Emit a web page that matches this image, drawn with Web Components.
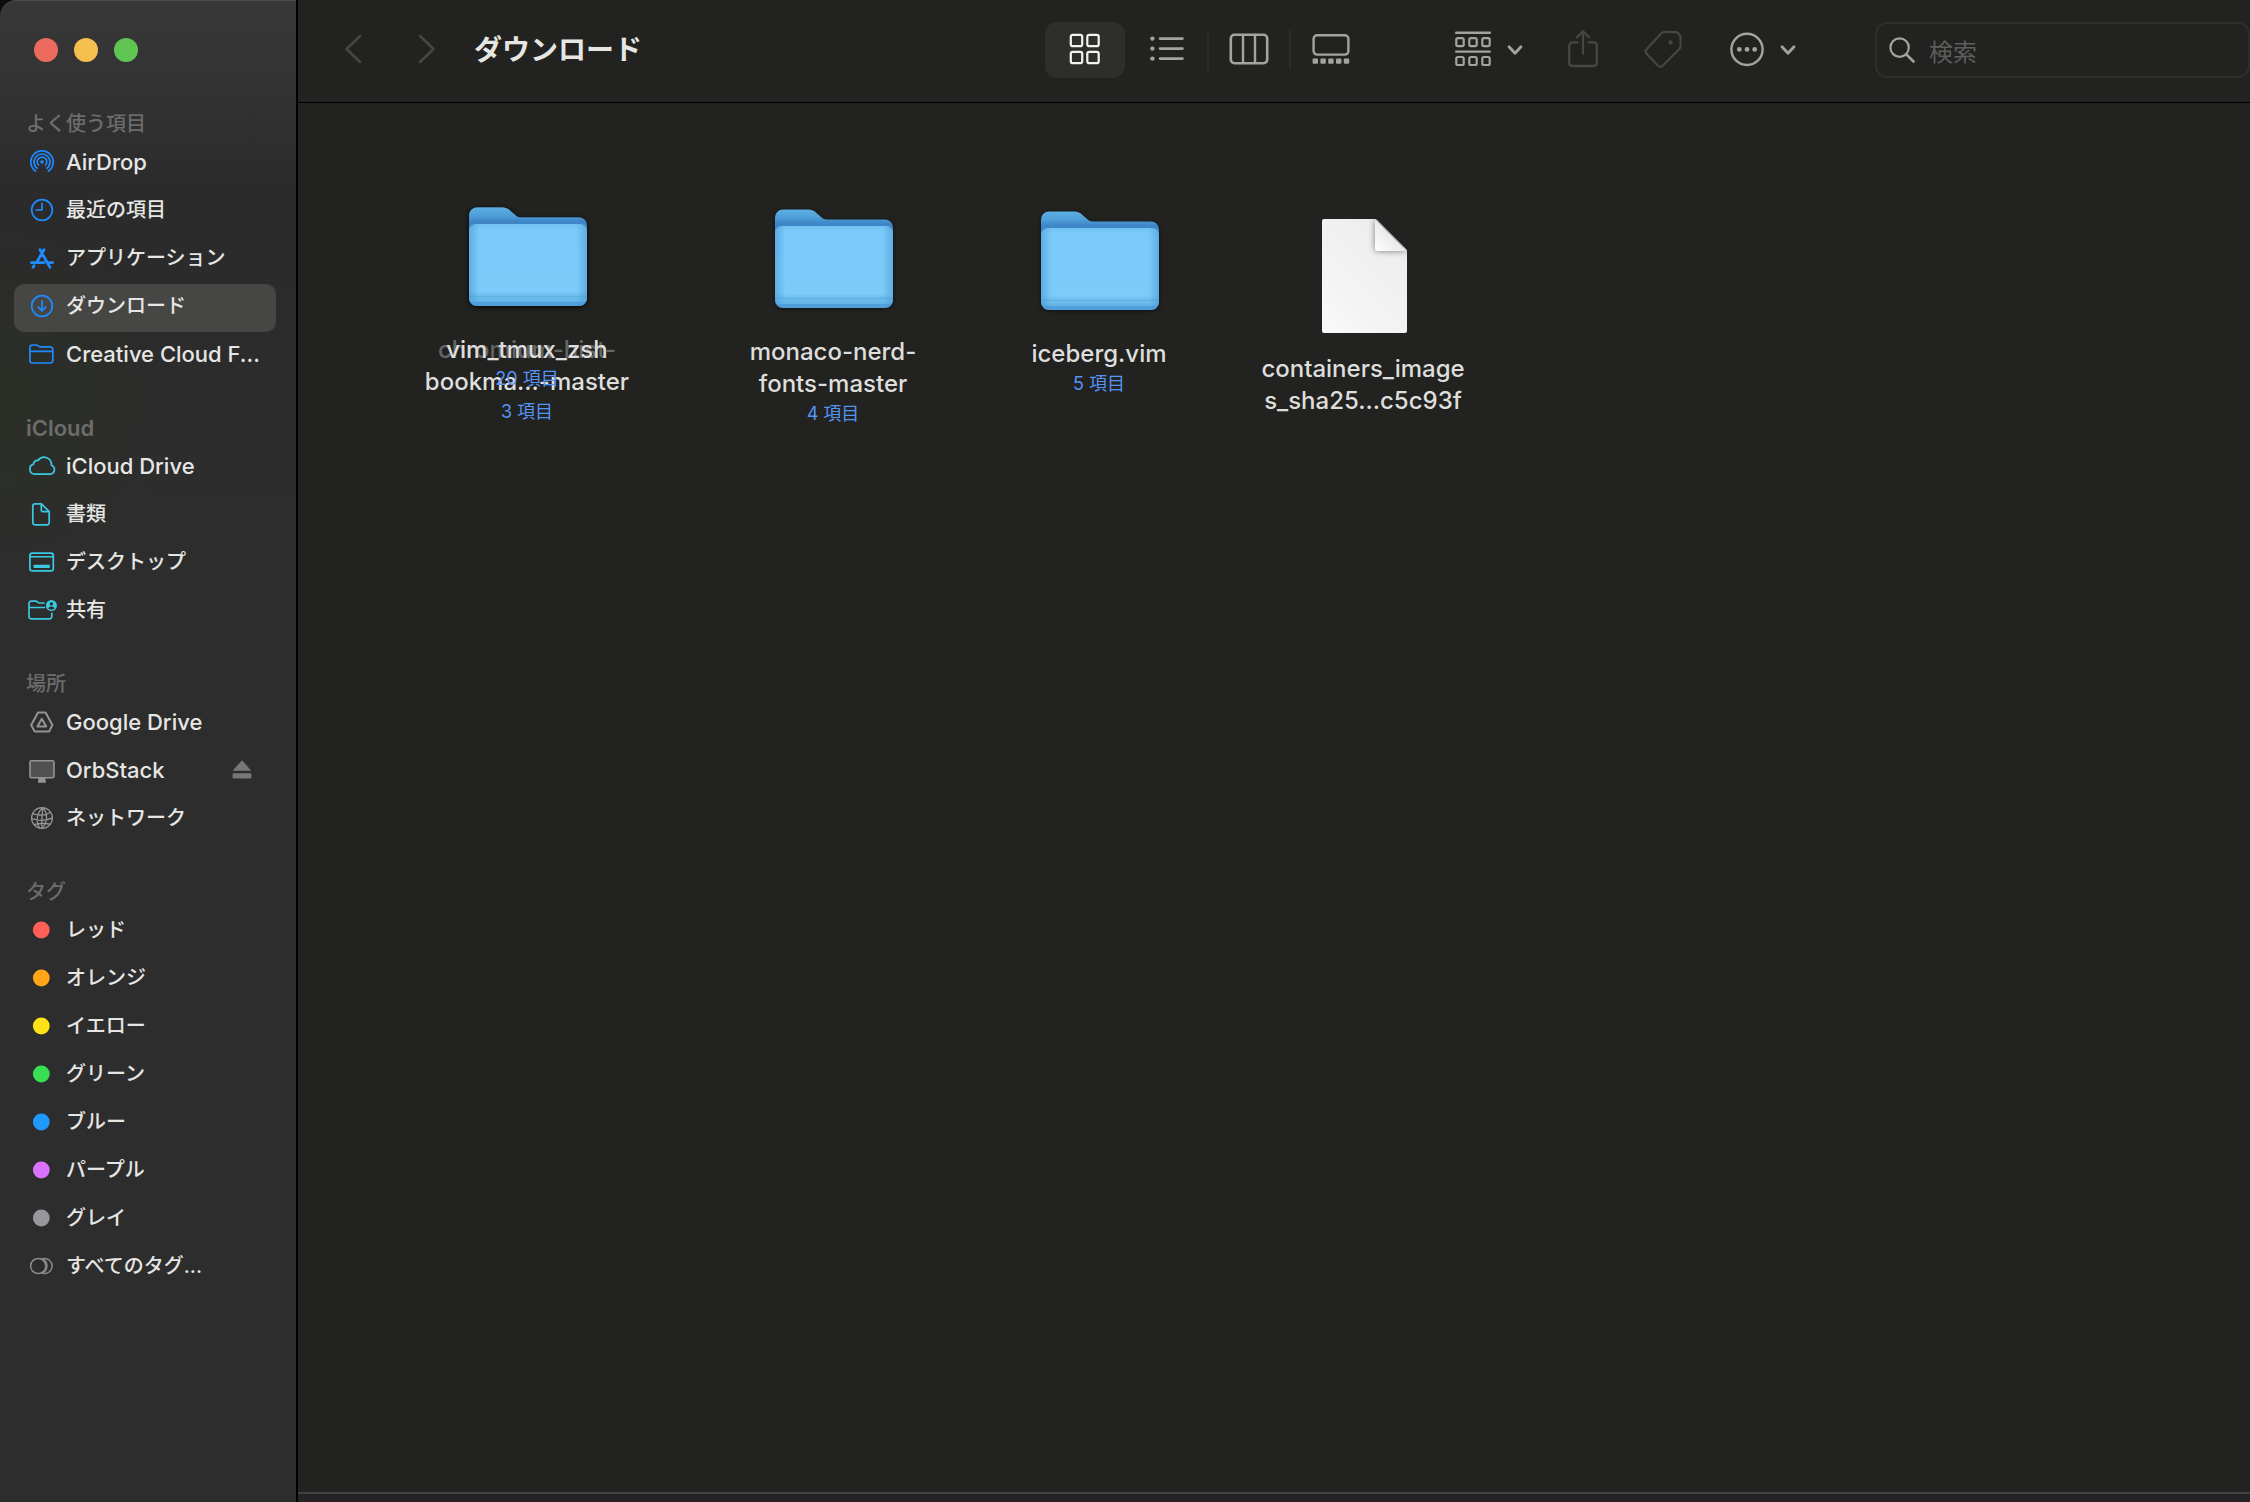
<!DOCTYPE html>
<html lang="ja">
<head>
<meta charset="utf-8">
<meta name="viewport" content="width=device-width, initial-scale=1">
<title>ダウンロード</title>
<style>
  html, body { height: 100%; }
  body {
    margin: 0;
    background: #0c0c0c;
    color: #e6e6e4;
    font: 500 20px/24px Inter, "Noto Sans CJK JP", sans-serif;
    overflow: hidden;
  }
</style>
</head>
<body>
<finder-window>
  <finder-sidebar slot="sidebar">
    <sidebar-section label="よく使う項目">
      <sidebar-item icon="airdrop" lang="en">AirDrop</sidebar-item>
      <sidebar-item icon="clock">最近の項目</sidebar-item>
      <sidebar-item icon="apps">アプリケーション</sidebar-item>
      <sidebar-item icon="download" selected>ダウンロード</sidebar-item>
      <sidebar-item icon="folder" lang="en">Creative Cloud F...</sidebar-item>
    </sidebar-section>
    <sidebar-section label="iCloud" latin style="--tint:#3bc9e2">
      <sidebar-item icon="cloud" lang="en">iCloud Drive</sidebar-item>
      <sidebar-item icon="doc">書類</sidebar-item>
      <sidebar-item icon="desktop">デスクトップ</sidebar-item>
      <sidebar-item icon="shared">共有</sidebar-item>
    </sidebar-section>
    <sidebar-section label="場所" style="--tint:#949494">
      <sidebar-item icon="gdrive" lang="en">Google Drive</sidebar-item>
      <sidebar-item icon="display" lang="en" ejectable>OrbStack</sidebar-item>
      <sidebar-item icon="globe">ネットワーク</sidebar-item>
    </sidebar-section>
    <sidebar-section label="タグ">
      <sidebar-item icon="dot" style="--tint:#ff5f57">レッド</sidebar-item>
      <sidebar-item icon="dot" style="--tint:#ffa518">オレンジ</sidebar-item>
      <sidebar-item icon="dot" style="--tint:#ffe316">イエロー</sidebar-item>
      <sidebar-item icon="dot" style="--tint:#38df54">グリーン</sidebar-item>
      <sidebar-item icon="dot" style="--tint:#1f98ff">ブルー</sidebar-item>
      <sidebar-item icon="dot" style="--tint:#d972ff">パープル</sidebar-item>
      <sidebar-item icon="dot" style="--tint:#98989c">グレイ</sidebar-item>
      <sidebar-item icon="alltags" style="--tint:#8a8a8a">すべてのタグ...</sidebar-item>
    </sidebar-section>
  </finder-sidebar>
  <finder-toolbar slot="toolbar">ダウンロード</finder-toolbar>
  <icon-canvas slot="content">
    <file-item kind="bigfolder" count="20 項目" ghost style="left:119px;top:90px">chromium-hist-</file-item>
    <file-item kind="bigfolder" count="3 項目" style="left:119px;top:90px">vim_tmux_zsh<br>bookma...-master</file-item>
    <file-item kind="bigfolder" count="4 項目" style="left:425px;top:92px">monaco-nerd-<br>fonts-master</file-item>
    <file-item kind="bigfolder" count="5 項目" style="left:691px;top:94px">iceberg.vim</file-item>
    <file-item kind="bigdoc" style="left:955px;top:109px">containers_image<br>s_sha25...c5c93f</file-item>
  </icon-canvas>
</finder-window>

<script>
const S = (w, h, body, extra = '') =>
  `<svg width="${w}" height="${h}" viewBox="0 0 ${w} ${h}" fill="none" stroke="currentColor" stroke-width="2" stroke-linecap="round" stroke-linejoin="round" aria-hidden="true" ${extra}>${body}</svg>`;

const ICONS = {
  airdrop: S(28, 28, `<g stroke-width="1.7" stroke-linecap="butt"><path d="M8.1 23.5a11.2 11.2 0 1 1 11.8 0"/><path d="M9.6 20.7a8 8 0 1 1 8.8 0"/><path d="M11 17.7a4.8 4.8 0 1 1 6 0"/></g><circle cx="14" cy="14" r="1.8" fill="currentColor" stroke="none"/>`),
  clock: S(28, 28, `<circle cx="14" cy="14" r="10.3" stroke-width="1.7"/><path d="M14 7.3V14H8" stroke-width="1.7"/>`),
  apps: S(28, 28, `<path d="M3.4 18.6H16M21.6 18.6h3M12 5.8l10 17.6M16 5.8L8.6 18.4M6 21.7l-1 1.7" stroke-width="2.8"/>`),
  download: S(28, 28, `<circle cx="14" cy="14" r="10.3" stroke-width="1.7"/><path d="M14 8.8v9.8M10.2 15l3.8 3.8 3.8-3.8" stroke-width="1.7"/>`),
  folder: S(28, 28, `<path d="M1.9 20.6V7.4a2.4 2.4 0 0 1 2.4-2.4h3.8c1.8 0 2.2 1.9 4 1.9h10.3a2.4 2.4 0 0 1 2.4 2.4v11.3a2.4 2.4 0 0 1-2.4 2.4H4.3a2.4 2.4 0 0 1-2.4-2.4zM2 11.3h22.6" stroke-width="1.7"/>`),
  cloud: S(28, 28, `<path d="M6.4 22.2a5.2 5.2 0 0 1-.9-10.1 3.9 3.9 0 0 1 4.6-3.6 7.3 7.3 0 0 1 13.3 4.8 4.6 4.6 0 0 1-1.2 8.9z" stroke-width="1.7"/>`),
  doc: S(28, 28, `<path d="M7 3.8h6.4L21.2 11.6v11a2.2 2.2 0 0 1-2.2 2.2H7a2.2 2.2 0 0 1-2.2-2.2V6A2.2 2.2 0 0 1 7 3.8zM13.3 4v6.2a1.5 1.5 0 0 0 1.5 1.5h6.2" stroke-width="1.7"/>`),
  desktop: S(28, 28, `<rect x="1.9" y="5.2" width="23.4" height="17.6" rx="2.4" stroke-width="1.7"/><path d="M2 8.8h23" stroke-width="1.4"/><rect x="5.6" y="16.7" width="16.2" height="3.4" rx=".6" fill="currentColor" stroke="none"/>`),
  shared: S(30, 28, `<path d="M16 7H11.5C9.8 7 9.4 5.2 7.7 5.2H3.2A2.2 2.2 0 0 0 1 7.4v13.2a2.2 2.2 0 0 0 2.2 2.2h18.4a2.2 2.2 0 0 0 2.2-2.2v-3.2M1 11.5h15.500" stroke-width="1.7"/><circle cx="23.4" cy="9.5" r="5.5" fill="currentColor" stroke="none"/><circle cx="23.4" cy="7.9" r="1.7" fill="#2d2d2c" stroke="none"/><path d="M20.2 12.6c.6-2.8 5.8-2.8 6.4 0-1.7 1.5-4.7 1.5-6.4 0z" fill="#2d2d2c" stroke="none"/>`),
  gdrive: S(28, 28, `<path d="M10 4.6h7.6L24.4 17l-3.2 6.4H6.6L3.2 17zM13.8 10.8l4.4 7.700H9.4z" stroke-width="2"/>`),
  display: S(28, 28, `<path d="M10.6 22h6.6l.8 4.8H9.8z" fill="currentColor" stroke="none"/><rect x="2" y="4.8" width="24" height="17" rx="1.6" fill="#515151" stroke-width="1.6"/>`),
  globe: S(28, 28, `<g stroke-width="1.3"><circle cx="14" cy="14" r="10.4"/><path d="M15 3.6c-6.5 5-7.4 14-3.4 20.6M15 3.6c5.2 6 4.6 15-1 20.8M14.8 3.8c-.8 6-1.1 14-.9 20.6M5 9.6c5.5 2.2 12.5 2 17.6-1.4M3.6 14.6c7 2.4 14.5 2.2 20.7-.8M6 20.6c5.5-1.4 11-1.4 16.5-.4"/></g>`),
  dot: S(28, 28, `<circle cx="13.3" cy="14" r="8.4" fill="currentColor" stroke="none"/>`),
  alltags: S(28, 28, `<g stroke-width="1.5"><circle cx="10.2" cy="14" r="7.6"/><path d="M15.3 6.5a7.6 7.6 0 1 1 0 15"/><path d="M13.8 6.8a7.6 7.6 0 0 1 0 14.4"/></g>`),
  eject: S(20, 20, `<path d="M10 .2L19.4 10.800H.6z" fill="currentColor" stroke="none"/><rect x=".6" y="13.2" width="18.8" height="5.2" rx=".8" fill="currentColor" stroke="none"/>`),
  back: S(18, 30, `<path d="M15 1L1.5 14 15 27" stroke-width="2.6"/>`),
  forward: S(18, 30, `<path d="M2 1l13.5 13L2 27" stroke-width="2.6"/>`),
  grid: S(32, 32, `<g stroke-width="2.2"><rect x="1.8" y=".8" width="11.4" height="11.4" rx="2"/><rect x="18.3" y=".8" width="11.4" height="11.4" rx="2"/><rect x="1.8" y="17.8" width="11.4" height="11.4" rx="2"/><rect x="18.3" y="17.8" width="11.4" height="11.4" rx="2"/></g>`),
  list: S(34, 28, `<g fill="currentColor" stroke="none"><circle cx="2.4" cy="2.6" r="2.2"/><circle cx="2.4" cy="12.6" r="2.2"/><circle cx="2.4" cy="22.6" r="2.2"/></g><path d="M10 2.6h22.5M10 12.6h22.5M10 22.6h22.5" stroke-width="2.6"/>`),
  columns: S(40, 32, `<rect x="1.8" y=".8" width="36.4" height="28.4" rx="3.6" stroke-width="2.6"/><path d="M14 1v28M26 1v28" stroke-width="2.4"/>`),
  gallery: S(38, 32, `<rect x="1.6" y="1.2" width="34.8" height="19.4" rx="3.6" stroke-width="2.4"/><g fill="currentColor" stroke="none"><rect x=".6" y="24.4" width="5.4" height="5.4" rx="1"/><rect x="8.4" y="24.4" width="5.4" height="5.4" rx="1"/><rect x="16.2" y="24.4" width="5.4" height="5.4" rx="1"/><rect x="24" y="24.4" width="5.4" height="5.4" rx="1"/><rect x="31.8" y="24.4" width="5.4" height="5.4" rx="1"/></g>`),
  group: S(36, 36, `<path d="M1.2 .8h33.6M1.2 19.6h33.6" stroke-width="2.4"/><g stroke-width="2.2"><rect x="1.3" y="6.2" width="7.4" height="8" rx="1.6"/><rect x="14.3" y="6.2" width="7.4" height="8" rx="1.6"/><rect x="27.3" y="6.2" width="7.4" height="8" rx="1.6"/><rect x="1.3" y="25" width="7.4" height="8" rx="1.6"/><rect x="14.3" y="25" width="7.4" height="8" rx="1.6"/><rect x="27.3" y="25" width="7.4" height="8" rx="1.6"/></g>`),
  chevron: S(16, 12, `<path d="M2 2.800l6 6.400 6-6.400" stroke-width="2.8"/>`),
  share: S(32, 40, `<path d="M10.5 12.400H5.4A3.2 3.2 0 0 0 2.2 15.600v17.2a3.2 3.2 0 0 0 3.2 3.2h21.2a3.2 3.2 0 0 0 3.2-3.2V15.600A3.2 3.2 0 0 0 26.6 12.400h-5.1M16 23.400V1.500M10 7.300l6-6 6 6" stroke-width="2.3"/>`),
  tag: S(38, 38, `<path d="M20.200 1.200h11.600a4.400 4.400 0 0 1 2.700 1.200l1.200 1.600a4.400 4.400 0 0 1 .8 2.600v8.600a4.400 4.400 0 0 1-1.200 2.800L18.600 34.800a3.300 3.300 0 0 1-4.600 0L2.600 22.800a3.300 3.300 0 0 1 0-4.600L17.200 2.400a4.400 4.400 0 0 1 3-1.200z" stroke-width="2.2"/><circle cx="26.6" cy="11.400" r="2.2" fill="currentColor" stroke="none"/>`),
  more: S(34, 34, `<circle cx="17" cy="16.400" r="15.6" stroke-width="2.4"/><g fill="currentColor" stroke="none"><circle cx="9.3" cy="16.400" r="2.4"/><circle cx="17" cy="16.400" r="2.4"/><circle cx="24.7" cy="16.400" r="2.4"/></g>`),
  search: S(26, 26, `<circle cx="10.600" cy="10.600" r="9.2" stroke-width="2.2"/><path d="M17.300 17.300l7.200 7.200" stroke-width="2.6"/>`),
  bigfolder: `<svg width="128" height="128" viewBox="-1 0 128 128" aria-hidden="true"><defs>
    <linearGradient id="b" x1="0" y1="0" x2="0" y2="1"><stop offset="0" stop-color="#5bb0e4"/><stop offset=".1" stop-color="#4f9fd8"/><stop offset=".18" stop-color="#3f86c8"/><stop offset="1" stop-color="#3f86c8"/></linearGradient>
    <linearGradient id="f" x1="0" y1="0" x2="0" y2="1"><stop offset="0" stop-color="#71c1f2"/><stop offset=".08" stop-color="#7acafa"/><stop offset=".82" stop-color="#7ccbf9"/><stop offset=".87" stop-color="#6fbff0"/><stop offset=".88" stop-color="#5fafe2"/><stop offset=".9" stop-color="#6cbdee"/><stop offset=".945" stop-color="#65b5e8"/><stop offset=".95" stop-color="#4f9fda"/><stop offset="1" stop-color="#4f9fda"/></linearGradient>
    <linearGradient id="s"><stop offset="0" stop-color="#4a9ad6" stop-opacity=".6"/><stop offset=".09" stop-color="#4a9ad6" stop-opacity="0"/><stop offset=".91" stop-color="#4a9ad6" stop-opacity="0"/><stop offset="1" stop-color="#4a9ad6" stop-opacity=".6"/></linearGradient></defs>
    <g style="filter:drop-shadow(0 1px 2px rgba(0,0,0,.5))"><path d="M5 22.500a8 8 0 0 1 8-8h25c4 0 6 1 9 4l3 2.500c2.500 2.500 4 3.500 8 3.500h57a8 8 0 0 1 8 8v60H5z" fill="url(#b)"/>
    <path d="M5 38a7 7 0 0 1 7-7h104a7 7 0 0 1 7 7v67a8 8 0 0 1-8 8H13a8 8 0 0 1-8-8z" fill="url(#f)"/></g>
    <path d="M5 38a7 7 0 0 1 7-7h104a7 7 0 0 1 7 7v67a8 8 0 0 1-8 8H13a8 8 0 0 1-8-8z" fill="url(#s)"/></svg>`,
  bigdoc: `<svg width="128" height="128" viewBox="-1 0 128 128" aria-hidden="true"><defs>
    <linearGradient id="p" x1="1" y1="0" x2="0" y2="1"><stop offset="0" stop-color="#eaeaea"/><stop offset=".6" stop-color="#f3f3f3"/><stop offset="1" stop-color="#fcfcfc"/></linearGradient>
    <linearGradient id="c" x1="0" y1="1" x2=".6" y2=".4"><stop offset="0" stop-color="#fff"/><stop offset="1" stop-color="#e6e6e6"/></linearGradient>
    <clipPath id="k"><path d="M24 7h50q2 0 3 1l29 29q1 1 1 3v79q0 2-2 2H24q-2 0-2-2V9q0-2 2-2z"/></clipPath></defs>
    <g clip-path="url(#k)"><rect width="128" height="128" fill="url(#p)"/>
    <path d="M75 6v30q0 3 3 3h30z" fill="#777" style="filter:blur(3px)"/></g>
    <path d="M75 7.500L106.500 39H78q-3 0-3-3z" fill="url(#c)"/></svg>`
};

/* Base class: attaches an open shadow root and fills it from view(). */
class Base extends HTMLElement {
  connectedCallback() {
    if (this.shadowRoot) return;
    this.attachShadow({ mode: 'open' }).innerHTML = this.view();
  }
}

const BUTTON = `button{all:unset;box-sizing:border-box;display:flex;align-items:center;justify-content:center;cursor:default}`;

customElements.define('ui-icon', class extends Base {
  view() {
    return `<style>:host{display:block;flex:none}svg{display:block;overflow:visible}</style>${ICONS[this.getAttribute('name')]}`;
  }
});

customElements.define('finder-window', class extends Base {
  view() {
    return `<style>
      :host{display:flex;height:100vh;box-sizing:border-box;border-top-left-radius:16px;overflow:hidden}
      main{flex:1;min-width:0;display:flex;flex-direction:column;background:#222220}
      footer{height:8px;border-top:2px solid #41413e;background:linear-gradient(#232325 6px,#2b2226 6px)}
    </style>
    <slot name="sidebar"></slot>
    <main><slot name="toolbar"></slot><slot name="content"></slot><footer></footer></main>`;
  }
});

customElements.define('finder-sidebar', class extends Base {
  view() {
    return `<style>
      :host{display:block;flex:none;width:296px;border-right:2px solid #000;overflow:hidden;
        border-top-left-radius:16px;box-shadow:inset 0 1px 0 #4c4c4e;
        background:radial-gradient(circle at 0 400px,rgba(42,48,36,.7),rgba(42,48,36,0) 180px),linear-gradient(#373738 0,#343435 70px,#2b2b2b 190px,#2b2b2b 260px,#2d2d2d 500px,#2d2d2d)}
      .lights{display:flex;gap:16px;padding:38px 34px 14px}
      ${BUTTON}
      button{width:24px;height:24px;border-radius:50%}
      .close{background:#ed6a5f}.min{background:#f5bf4f}.zoom{background:#61c554}
    </style>
    <div class="lights"><button class="close" aria-label="閉じる"></button><button class="min" aria-label="しまう"></button><button class="zoom" aria-label="フルスクリーン"></button></div>
    <nav><slot></slot></nav>`;
  }
});

customElements.define('sidebar-section', class extends Base {
  view() {
    return `<style>
      :host{display:block}
      h2{margin:0;box-sizing:border-box;height:64px;padding:36px 26px 0;font:inherit;color:#6c6c6b}
      :host([latin]) h2{font-size:22px;font-weight:600}
    </style><h2>${this.getAttribute('label')}</h2><slot></slot>`;
  }
});

customElements.define('sidebar-item', class extends Base {
  view() {
    const eject = this.hasAttribute('ejectable')
      ? `<button class="eject" aria-label="取り出す"><ui-icon name="eject"></ui-icon></button>` : '';
    return `<style>
      :host{display:flex;align-items:center;box-sizing:border-box;height:48px;margin:0 20px 0 14px;border-radius:10px}
      :host([selected]){background:#464645}
      :host(:lang(en)){font-size:22px}
      a{flex:1;min-width:0;display:flex;align-items:center;gap:10px;height:44px;padding:0 0 4px 14px;color:inherit;text-decoration:none;white-space:nowrap}
      ui-icon{width:28px;color:var(--tint,#1e8cff)}
      ${BUTTON}
      .eject{padding:0 24px 4px 0}
      .eject ui-icon{width:20px;color:#777}
    </style><a href="#"><ui-icon name="${this.getAttribute('icon')}"></ui-icon><span><slot></slot></span></a>${eject}`;
  }
});

customElements.define('finder-toolbar', class extends Base {
  view() {
    return `<style>
      :host{display:flex;align-items:center;box-sizing:border-box;height:103px;padding:0 0 2px 19px;border-bottom:1px solid #000;background:#222221;color:#a3a39f}
      ${BUTTON}
      button{height:56px;width:56px;border-radius:12px}
      .nav button{width:73px}
      .nav,.views{display:flex;align-items:center}
      .off{color:#464644}
      h1{flex:1;margin:0 0 0 11px;font-size:28px;line-height:36px;font-weight:700;color:#e6e6e3}
      .views{margin-right:76px}
      .views button{width:80px}
      .views button[aria-pressed=true]{background:#2e2e2d;color:#f3f3f1}
      i{width:2px;height:40px}
      i.line{background:#2c2c2b}
      .tools{display:flex;gap:24px;margin-right:71px}
      .tools .menu{width:auto;gap:16px;padding:0 8px}
      .tools .menu:last-child{margin-left:7px}
      label{display:flex;align-items:center;gap:14px;box-sizing:border-box;width:375px;height:56px;padding:0 14px 0 12px;border:2px solid #2e2e2d;border-radius:12px}
      input{all:unset;flex:1;min-width:0;font-size:24px;line-height:32px;padding-top:6px;font-weight:400;color:#e6e6e3}
      input::placeholder{color:#5d5d5b;opacity:1}
    </style>
    <div class="nav off"><button aria-label="戻る"><ui-icon name="back"></ui-icon></button><button aria-label="進む"><ui-icon name="forward"></ui-icon></button></div>
    <h1><slot></slot></h1>
    <div class="views">
      <button aria-label="アイコン" aria-pressed="true"><ui-icon name="grid"></ui-icon></button><i></i>
      <button aria-label="リスト"><ui-icon name="list"></ui-icon></button><i class="line"></i>
      <button aria-label="カラム"><ui-icon name="columns"></ui-icon></button><i class="line"></i>
      <button aria-label="ギャラリー"><ui-icon name="gallery"></ui-icon></button>
    </div>
    <div class="tools">
      <button class="menu" aria-label="グループ"><ui-icon name="group"></ui-icon><ui-icon name="chevron"></ui-icon></button>
      <button class="off" aria-label="共有"><ui-icon name="share"></ui-icon></button>
      <button class="off" aria-label="タグ"><ui-icon name="tag"></ui-icon></button>
      <button class="menu" aria-label="その他"><ui-icon name="more"></ui-icon><ui-icon name="chevron"></ui-icon></button>
    </div>
    <label><ui-icon name="search"></ui-icon><input type="text" placeholder="検索" aria-label="検索"></label>`;
  }
});

customElements.define('icon-canvas', class extends Base {
  view() {
    return `<style>:host{display:block;position:relative;flex:1;min-height:0}</style><slot></slot>`;
  }
});

/* Icons sit wherever they were dropped on the canvas. */
customElements.define('file-item', class extends Base {
  view() {
    const count = this.getAttribute('count');
    return `<style>
      :host{position:absolute;width:220px;display:flex;flex-direction:column;align-items:center;text-align:center}
      .name{margin-top:13px;font-size:24px;line-height:32px;white-space:nowrap;color:#dededc}
      .count{position:relative;z-index:1;margin-top:2px;font-size:18px;line-height:24px;font-weight:400;color:#5494f5}
      :host([ghost]) .name{color:#656564}
      :host([ghost]) .count{margin-top:1px}
    </style><ui-icon name="${this.getAttribute('kind')}"></ui-icon><div class="name"><slot></slot></div>${count ? `<div class="count">${count}</div>` : ''}`;
  }
});
</script>
</body>
</html>
